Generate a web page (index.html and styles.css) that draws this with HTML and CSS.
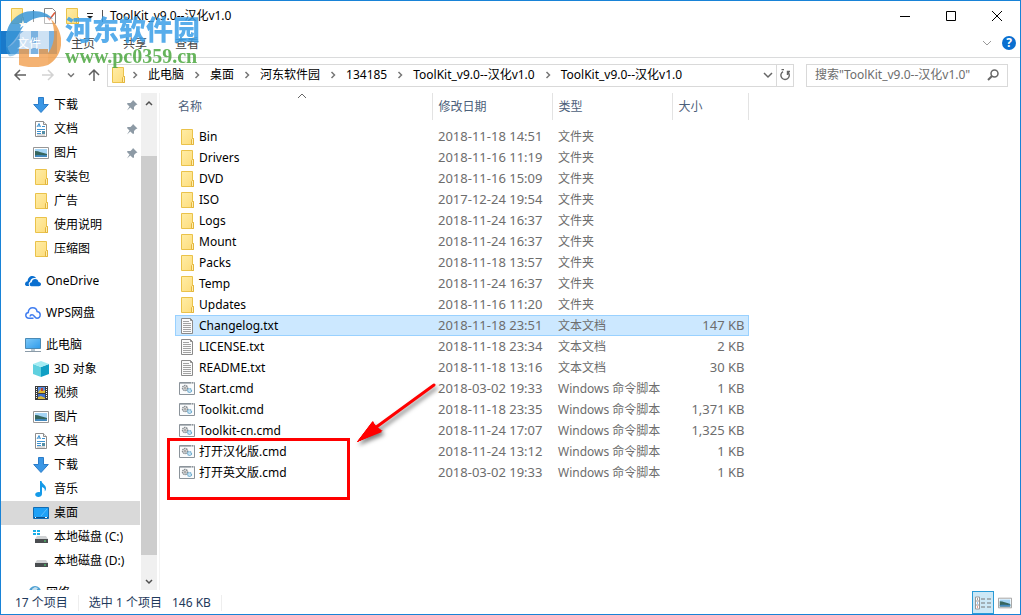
FILE: index.html
```
<!DOCTYPE html>
<html lang="zh-CN">
<head>
    <meta charset="UTF-8">
    <meta name="viewport" content="width=device-width, initial-scale=1.0">
    <title>ToolKit_v9.0--汉化v1.0</title>
    <link rel="stylesheet" href="styles.css">
</head>
<body>
    <svg class="sprite" aria-hidden="true">
        <defs>
            <linearGradient id="g-folder" x1="0" y1="0" x2="1" y2="1">
                <stop offset="0" stop-color="#ffeda6"/><stop offset="1" stop-color="#fddc7b"/>
            </linearGradient>
            <linearGradient id="g-screen" x1="0" y1="0" x2="1" y2="1">
                <stop offset="0" stop-color="#7cc8f8"/><stop offset="1" stop-color="#2f9bea"/>
            </linearGradient>
        </defs>
        <symbol id="folder" viewBox="0 0 16 16">
            <path d="M2.500.5h11v9h1v6h-12z" fill="url(#g-folder)" stroke="#eac24a"/>
            <path d="M12.500 15.500v-5l1-1h1v6z" fill="#fff0b0" stroke="#e3b53d"/>
        </symbol>
        <symbol id="txt" viewBox="0 0 16 16">
            <path d="M2.500.5h9l2 2v13h-11z" fill="#fbfbfb" stroke="#8a8a8a"/>
            <path d="M11.500.5v2h2" fill="none" stroke="#8a8a8a"/>
            <path d="M4 3.500h6M4 5.500h8M4 7.500h8M4 9.500h8M4 11.500h8M4 13.500h8" stroke="#a2a2a2"/>
        </symbol>
        <symbol id="cmd" viewBox="0 0 16 16">
            <path d="M.5 1.500h15v12H.5z" fill="#fafbfc" stroke="#8b939a"/>
            <path d="M1 2.500h14" stroke="#b4babf"/>
            <path d="M12 2h1M14 2h1" stroke="#fff"/>
            <circle cx="6" cy="7" r="2.500" fill="#e8e8e8" stroke="#878d92" stroke-width="1.500" stroke-dasharray="1.500 .6"/>
            <circle cx="6" cy="7" r="1" fill="#999"/>
            <circle cx="10.500" cy="9.500" r="2" fill="#c4e2f2" stroke="#6eaacd" stroke-width="1.200" stroke-dasharray="1.300 .5"/>
        </symbol>
        <symbol id="down" viewBox="0 0 16 16">
            <path d="M5.500.5h5v7h4.800L8 15.500.7 7.500h4.800z" fill="#3b97e5" stroke="#2b7cc9"/>
        </symbol>
        <symbol id="doc" viewBox="0 0 16 16">
            <path d="M2.500.5h8l3 3v12h-11z" fill="#fff" stroke="#8d8d8d"/>
            <path d="M10.500.5v3h3" fill="#eee" stroke="#8d8d8d"/>
            <path d="M4 6l2-3.500L7.500 6M5 5h2M9 5.500h3M4 8.500h8M4 10.500h4M4 12.500h4" fill="none" stroke="#3c91cf"/>
            <path d="M9 10h3v3H9z" fill="#548fa8"/>
            <path d="M4 14h8" stroke="#b4b4b4"/>
        </symbol>
        <symbol id="pic" viewBox="0 0 16 16">
            <path d="M.5 2.500h15v11H.5z" fill="#fff" stroke="#979797"/>
            <path d="M2 4h12v8H2z" fill="#a5d5f5"/>
            <path d="M2 6c4 0 7 2 12 3v3H2z" fill="#36665e"/>
            <path d="M2 10.500c4-1 8 0 12-.5v2H2z" fill="#4389be"/>
        </symbol>
        <symbol id="cloud" viewBox="0 0 16 16">
            <path d="M0 11.200c0-2 1.400-3 2.700-3C2.600 5 5 3 7.400 3c2 0 3.200 1 3.800 2.300C7.800 4.300 5.600 6 5.200 8.500 3.700 9 3.200 11 4.200 13H2.500C1 13 0 12.300 0 11.200z" fill="#0a6fd0"/>
            <path d="M4.700 11.500c0-1.400 1-2.300 2-2.300C7 6.800 8.600 6 10 6c2 0 3.200 1.300 3.500 3 1.500.1 2.500 1 2.500 2.200 0 1.200-1 2-2.200 2H6.500c-1.100 0-1.800-.7-1.800-1.700z" fill="#0a6fd0"/>
        </symbol>
        <symbol id="wps" viewBox="0 0 16 16">
            <path d="M8.500 13.200H4C2 13.200.8 12 .8 10.300c0-1.500 1-2.600 2.500-2.800C3.300 4.600 5.200 2.800 7.700 2.800c2.300 0 4 1.500 4.400 3.700 1.900.2 3.100 1.600 3.100 3.300 0 1.900-1.400 3.400-3.300 3.400-2.300 0-2.500-3.400-4.900-3.400-1.200 0-1.800.8-1.800 1.700" fill="none" stroke="#3f7df0" stroke-width="1.500"/>
        </symbol>
        <symbol id="pc" viewBox="0 0 16 16">
            <path d="M.5 1.500h15v10H.5z" fill="url(#g-screen)" stroke="#4b8ab5"/>
            <path d="M6 12h4v2H6z" fill="#b8c7d1"/>
            <path d="M0 14.500h16" stroke="#8b9ba8"/>
        </symbol>
        <symbol id="cube" viewBox="0 0 16 16">
            <path d="M0 3l8 3v10l-8-3z" fill="#5fd0df"/>
            <path d="M16 3L8 6v10l8-3z" fill="#109fc4"/>
            <path d="M0 3l8-3 8 3-8 3z" fill="#a4ecf3"/>
        </symbol>
        <symbol id="film" viewBox="0 0 16 16">
            <path d="M2 1h13v14H2z" fill="#3c3c3c"/>
            <path d="M5 2h7v6H5z" fill="#5b8ede"/><path d="M5 9h7v5H5z" fill="#3c6fd0"/>
            <path d="M6 6l2-2 2 2 2-1v3H5z" fill="#e1b82f"/><path d="M8 3h2v3H8z" fill="#c43f2e"/>
            <path d="M5 12l3-1 4 2v1H5z" fill="#d9b93e"/>
            <path d="M3.500 2v12M13.500 2v12" stroke="#fff" stroke-dasharray="1 1"/>
        </symbol>
        <symbol id="note" viewBox="0 0 16 16">
            <path d="M7 0h1.500c.3 3 5 4 4.500 8-.2 1-.8 2-1.300 2.300.6-2-.7-3.700-2.700-4.300v7c0 2-1.700 3-3.700 3C3.500 16 2.200 15 2.200 13.500S4 10.800 7 11.200z" fill="#159ae8"/>
        </symbol>
        <symbol id="desk" viewBox="0 0 16 16">
            <path d="M.5 2.500h15v11H.5z" fill="#1ea1f7" stroke="#126bb2"/>
            <path d="M1 12.500h14" stroke="#0d4f8a"/>
            <path d="M2 12.500h1M12 12.500h2" stroke="#fff"/>
            <path d="M8 11l6-7" stroke="#5cbdfb"/>
        </symbol>
        <symbol id="disk" viewBox="0 0 16 16">
            <path d="M4 7h9l2 3H2z" fill="#d0d2d4"/>
            <path d="M2 10h13v4H2z" fill="#4a4d50"/>
            <path d="M11 12h2" stroke="#4ee070"/>
        </symbol>
        <symbol id="diskc" viewBox="0 0 16 16">
            <path d="M0 1h3v2H0zM4 1h3v2H4zM0 4h3v2H0zM4 4h3v2H4z" fill="#19aee8"/>
            <use href="#disk"/>
        </symbol>
        <symbol id="net" viewBox="0 0 16 16">
            <circle cx="10" cy="7" r="6" fill="#4c9fd2"/>
            <path d="M7 4l3-2 3 1-2 3-3 1zM12 8l3-1-1 4z" fill="#c6e0ee"/>
        </symbol>
        <symbol id="pin" viewBox="0 0 16 16">
            <path d="M9 3l4.500 4.500-1.500.5-2 2 0 2.500-1 .5L6.300 10.500 3 13.500l2.500-4L3 7l.5-1L6.500 6l2-2z" fill="#8d9aa5"/>
        </symbol>
        <symbol id="next" viewBox="0 0 8 8">
            <path d="M2.500 1l3 3-3 3" fill="none" stroke="#777" stroke-width="1.500"/>
        </symbol>
        <symbol id="check" viewBox="0 0 16 16">
            <path d="M2.500.5h8l3 3v12h-11z" fill="#fff" stroke="#858585"/>
            <path d="M4.500 8l3 3.500 5.500-7" fill="none" stroke="#dc5a3c" stroke-width="1.500"/>
        </symbol>
    </svg>

    <div class="window">
        <header class="titlebar">
            <div class="quick">
                <svg class="icon"><use href="#folder"/></svg>
                <span class="bar"></span>
                <svg class="icon"><use href="#check"/></svg>
                <svg class="icon"><use href="#folder"/></svg>
                <svg class="more" viewBox="0 0 8 8"><path d="M1 1.500h6" stroke="#222"/><path d="M1 4h6L4 7z" fill="#222"/></svg>
                <span class="bar"></span>
            </div>
            <h1>ToolKit_v9.0--汉化v1.0</h1>
            <div class="controls">
                <button type="button" aria-label="最小化"><svg viewBox="0 0 12 12"><path d="M1 6.500h10" stroke="#000"/></svg></button>
                <button type="button" aria-label="最大化"><svg viewBox="0 0 12 12"><path d="M1.500 1.500h9v9h-9z" fill="none" stroke="#000"/></svg></button>
                <button type="button" aria-label="关闭"><svg viewBox="0 0 12 12"><path d="M1 1l10 10M11 1L1 11" stroke="#000"/></svg></button>
            </div>
        </header>

        <nav class="tabs">
            <button type="button" class="file">文件</button>
            <button type="button">主页</button>
            <button type="button">共享</button>
            <button type="button">查看</button>
            <span class="help">
                <svg viewBox="0 0 10 10"><path d="M1 3l4 4 4-4" fill="none" stroke="#999"/></svg>
                <button type="button" class="ask" aria-label="帮助">?</button>
            </span>
        </nav>

        <div class="address">
            <div class="arrows">
                <button type="button" aria-label="后退"><svg viewBox="0 0 14 14"><path d="M13 7H2M7 2L2 7l5 5" fill="none" stroke="#606060" stroke-width="1.500"/></svg></button>
                <button type="button" aria-label="前进"><svg viewBox="0 0 14 14"><path d="M1 7h11M7 2l5 5-5 5" fill="none" stroke="#d2d2d2" stroke-width="1.500"/></svg></button>
                <button type="button" class="small" aria-label="最近"><svg viewBox="0 0 8 8"><path d="M1 2.500l3 3 3-3" fill="none" stroke="#777" stroke-width="1.500"/></svg></button>
                <button type="button" aria-label="上移"><svg viewBox="0 0 14 14"><path d="M7 13V2M2 7l5-5 5 5" fill="none" stroke="#606060" stroke-width="1.500"/></svg></button>
            </div>
            <div class="path">
                <svg class="icon"><use href="#folder"/></svg>
                <svg class="sep"><use href="#next"/></svg><a href="#">此电脑</a>
                <svg class="sep"><use href="#next"/></svg><a href="#">桌面</a>
                <svg class="sep"><use href="#next"/></svg><a href="#">河东软件园</a>
                <svg class="sep"><use href="#next"/></svg><a href="#">134185</a>
                <svg class="sep"><use href="#next"/></svg><a href="#">ToolKit_v9.0--汉化v1.0</a>
                <svg class="sep"><use href="#next"/></svg><a href="#">ToolKit_v9.0--汉化v1.0</a>
                <button type="button" class="drop" aria-label="展开"><svg viewBox="0 0 10 10"><path d="M1 3l4 4 4-4" fill="none" stroke="#666" stroke-width="1.500"/></svg></button>
                <button type="button" class="refresh" aria-label="刷新"><svg viewBox="0 0 12 12"><path d="M8.500 2.800A4.200 4.200 0 1 1 4 2.600M5 .5H2.500M8.500 6V2.500H11" fill="none" stroke="#666" stroke-width="1.400"/></svg></button>
            </div>
            <div class="search">
                <input type="text" aria-label="搜索" placeholder="搜索&quot;ToolKit_v9.0--汉化v1.0&quot;">
                <svg viewBox="0 0 12 12"><circle cx="7.500" cy="4.500" r="3.500" fill="none" stroke="#666" stroke-width="1.500"/><path d="M5 7L1 11" stroke="#666" stroke-width="2"/></svg>
            </div>
        </div>

        <div class="content">
            <aside class="tree">
                <ul>
                    <li><svg class="icon"><use href="#down"/></svg>下载<svg class="pin"><use href="#pin"/></svg></li>
                    <li><svg class="icon"><use href="#doc"/></svg>文档<svg class="pin"><use href="#pin"/></svg></li>
                    <li><svg class="icon"><use href="#pic"/></svg>图片<svg class="pin"><use href="#pin"/></svg></li>
                    <li><svg class="icon"><use href="#folder"/></svg>安装包</li>
                    <li><svg class="icon"><use href="#folder"/></svg>广告</li>
                    <li><svg class="icon"><use href="#folder"/></svg>使用说明</li>
                    <li><svg class="icon"><use href="#folder"/></svg>压缩图</li>
                    <li class="root"><svg class="icon"><use href="#cloud"/></svg>OneDrive</li>
                    <li class="root"><svg class="icon"><use href="#wps"/></svg>WPS网盘</li>
                    <li class="root"><svg class="icon"><use href="#pc"/></svg>此电脑</li>
                    <li><svg class="icon"><use href="#cube"/></svg>3D 对象</li>
                    <li><svg class="icon"><use href="#film"/></svg>视频</li>
                    <li><svg class="icon"><use href="#pic"/></svg>图片</li>
                    <li><svg class="icon"><use href="#doc"/></svg>文档</li>
                    <li><svg class="icon"><use href="#down"/></svg>下载</li>
                    <li><svg class="icon"><use href="#note"/></svg>音乐</li>
                    <li class="current"><svg class="icon"><use href="#desk"/></svg>桌面</li>
                    <li><svg class="icon"><use href="#diskc"/></svg>本地磁盘 (C:)</li>
                    <li><svg class="icon"><use href="#disk"/></svg>本地磁盘 (D:)</li>
                    <li class="root"><svg class="icon"><use href="#net"/></svg>网络</li>
                </ul>
                <div class="scroll">
                    <svg viewBox="0 0 8 8"><path d="M1 6l3-3 3 3" fill="none" stroke="#505050" stroke-width="1.500"/></svg>
                    <div class="thumb"></div>
                    <svg viewBox="0 0 8 8"><path d="M1 2l3 3 3-3" fill="none" stroke="#505050" stroke-width="1.500"/></svg>
                </div>
            </aside>

            <main class="files">
                <table>
                    <thead>
                        <tr>
                            <th class="c-name">名称<svg class="sort" viewBox="0 0 8 6"><path d="M0 5l4-4 4 4" fill="none" stroke="#666"/></svg></th>
                            <th class="c-date">修改日期</th>
                            <th class="c-type">类型</th>
                            <th class="c-size">大小</th>
                        </tr>
                    </thead>
                    <tbody>
                        <tr><td class="name"><svg class="icon"><use href="#folder"/></svg>Bin</td><td class="date">2018-11-18 14:51</td><td>文件夹</td><td></td></tr>
                        <tr><td class="name"><svg class="icon"><use href="#folder"/></svg>Drivers</td><td class="date">2018-11-16 11:19</td><td>文件夹</td><td></td></tr>
                        <tr><td class="name"><svg class="icon"><use href="#folder"/></svg>DVD</td><td class="date">2018-11-16 15:09</td><td>文件夹</td><td></td></tr>
                        <tr><td class="name"><svg class="icon"><use href="#folder"/></svg>ISO</td><td class="date">2017-12-24 19:54</td><td>文件夹</td><td></td></tr>
                        <tr><td class="name"><svg class="icon"><use href="#folder"/></svg>Logs</td><td class="date">2018-11-24 16:37</td><td>文件夹</td><td></td></tr>
                        <tr><td class="name"><svg class="icon"><use href="#folder"/></svg>Mount</td><td class="date">2018-11-24 16:37</td><td>文件夹</td><td></td></tr>
                        <tr><td class="name"><svg class="icon"><use href="#folder"/></svg>Packs</td><td class="date">2018-11-18 13:57</td><td>文件夹</td><td></td></tr>
                        <tr><td class="name"><svg class="icon"><use href="#folder"/></svg>Temp</td><td class="date">2018-11-24 16:37</td><td>文件夹</td><td></td></tr>
                        <tr><td class="name"><svg class="icon"><use href="#folder"/></svg>Updates</td><td class="date">2018-11-16 11:20</td><td>文件夹</td><td></td></tr>
                        <tr class="selected"><td class="name"><svg class="icon"><use href="#txt"/></svg>Changelog.txt</td><td class="date">2018-11-18 23:51</td><td>文本文档</td><td class="size">147 KB</td></tr>
                        <tr><td class="name"><svg class="icon"><use href="#txt"/></svg>LICENSE.txt</td><td class="date">2018-11-18 23:34</td><td>文本文档</td><td class="size">2 KB</td></tr>
                        <tr><td class="name"><svg class="icon"><use href="#txt"/></svg>README.txt</td><td class="date">2018-11-18 13:16</td><td>文本文档</td><td class="size">30 KB</td></tr>
                        <tr><td class="name"><svg class="icon"><use href="#cmd"/></svg>Start.cmd</td><td class="date">2018-03-02 19:33</td><td>Windows 命令脚本</td><td class="size">1 KB</td></tr>
                        <tr><td class="name"><svg class="icon"><use href="#cmd"/></svg>Toolkit.cmd</td><td class="date">2018-11-18 23:35</td><td>Windows 命令脚本</td><td class="size">1,371 KB</td></tr>
                        <tr><td class="name"><svg class="icon"><use href="#cmd"/></svg>Toolkit-cn.cmd</td><td class="date">2018-11-24 17:07</td><td>Windows 命令脚本</td><td class="size">1,325 KB</td></tr>
                        <tr><td class="name"><svg class="icon"><use href="#cmd"/></svg>打开汉化版.cmd</td><td class="date">2018-11-24 13:12</td><td>Windows 命令脚本</td><td class="size">1 KB</td></tr>
                        <tr><td class="name"><svg class="icon"><use href="#cmd"/></svg>打开英文版.cmd</td><td class="date">2018-03-02 19:33</td><td>Windows 命令脚本</td><td class="size">1 KB</td></tr>
                    </tbody>
                </table>
                <div class="mark"></div>
                <svg class="pointer" viewBox="0 0 90 70">
                    <path d="M79 6L20 49" stroke="#f00" stroke-width="3" stroke-linecap="round"/>
                    <path d="M2 63L18 43l3 5 6 5z" fill="#f00"/>
                    <path d="M2 63L18 43l4 5 5 4 z M2 63l16-20 3 4 5 4 2 1-1 0z" fill="#f00"/>
                    <path d="M2 63L17 43l5 5 4 3v0l0 0z" fill="#f00"/>
                    <path d="M2 63L18 42l1 7 5 2 2 1z" fill="#f00"/>
                    <path d="M2 63l24-11-6-4-2-6z" fill="#f00"/>
                </svg>
            </main>
        </div>

        <footer class="status">
            <span class="count">17 个项目</span>
            <span class="picked">选中 1 个项目</span>
            <span class="total">146 KB</span>
            <div class="views">
                <button type="button" class="on" aria-label="详细信息"><svg viewBox="0 0 16 13"><path d="M.5.5h4v12h-4zM.5 4.500h4M.5 8.500h4" fill="#fff" stroke="#999"/><path d="M6 2.500h4M12 2.500h4M6 6.500h4M12 6.500h4M6 10.500h4M12 10.500h4" stroke="#777"/><path d="M2 2h1v1H2z" fill="#444"/><path d="M2 6h1v1H2z" fill="#2b8be0"/><path d="M2 10h1v1H2z" fill="#d33a20"/></svg></button>
                <button type="button" aria-label="大图标"><svg viewBox="0 0 16 16"><use href="#pic"/></svg></button>
            </div>
        </footer>
    </div>

    <div class="watermark">
        <svg class="logo" viewBox="0 0 56 56">
            <circle cx="28" cy="28" r="27" fill="#fff" opacity=".5"/>
            <path d="M1 30C0 13 12 0 28 0c9 0 16 3 20 8C36 3 22 8 16 19 11 28 6 34 1 37z" fill="#3b97d7"/>
            <path d="M1 37c6-2 10-7 13-12v14c-2 4-6 7-10 6-2-3-3-5-3-8z" fill="#3b97d7" opacity=".6"/>
            <path d="M15 23l11-9v18h7V10l11 9v24H33V37h-7v8H15z" fill="#fff" opacity=".85"/>
            <path d="M46 8c15 14 13 37-3 46V42c7-9 8-22 3-34z" fill="#f0a050"/>
            <path d="M14 38h10v8h10v-8h9v16c-9 3-20 3-29 0z" fill="#f3a55a"/>
            <path d="M18 9l1 3h3l-2 2 1 3-3-2-3 2 1-3-2-2h3z" fill="#fff"/>
        </svg>
        <div class="brand">
            <strong>河东软件园</strong>
            <span>www.pc0359.cn</span>
        </div>
    </div>
</body>
</html>
```
FILE: styles.css
```
*{
    margin: 0;
    padding: 0;
    box-sizing: border-box;
}
body {
    height: 100vh;
    background: #fff;
    color: #000;
    font-family: "Noto Sans", "Noto Sans CJK SC", sans-serif;
    font-size: 12px;
    line-height: 16px;
}
button {
    border: none;
    background: none;
    font: inherit;
    display: flex;
    align-items: center;
    justify-content: center;
}
a {
    color: inherit;
    text-decoration: none;
}
svg {
    display: block;
    flex: none;
}
.sprite {
    position: absolute;
    width: 0;
    height: 0;
}
.icon {
    width: 16px;
    height: 16px;
}
.window {
    height: 100%;
    display: flex;
    flex-direction: column;
    border: 1px solid #1883d7;
}

/* title bar */
.titlebar {
    display: flex;
    align-items: center;
    height: 30px;
    flex: none;
}
.quick {
    display: flex;
    align-items: center;
    gap: 6px;
    padding-left: 8px;
}
.quick .bar {
    width: 1px;
    height: 12px;
    background: #555;
    margin: 0 2px;
}
.quick .more {
    width: 8px;
    height: 8px;
}
h1 {
    font-size: 12px;
    font-weight: normal;
    flex: 1;
    padding-left: 5px;
}
.controls {
    display: flex;
}
.controls button {
    width: 46px;
    height: 28px;
}
.controls svg {
    width: 12px;
    height: 12px;
}

/* ribbon tabs */
.tabs {
    display: flex;
    height: 27px;
    flex: none;
    padding-bottom: 3px;
    border-bottom: 1px solid #dadbdc;
}
.tabs button {
    padding: 2px 14px 0;
    color: #444;
}
.tabs .file {
    padding: 2px 16px 0;
    background: #1979ca;
    color: #fff;
}
.help {
    display: flex;
    align-items: center;
    gap: 10px;
    margin-left: auto;
    padding-right: 4px;
}
.help svg {
    width: 10px;
    height: 10px;
}
.help .ask {
    width: 14px;
    height: 14px;
    padding: 0;
    border-radius: 50%;
    background: #0a6fd0;
    color: #fff;
    font-weight: bold;
}

/* address row */
.address {
    display: flex;
    align-items: center;
    height: 34px;
    flex: none;
    padding-right: 12px;
}
.arrows {
    display: flex;
    align-items: center;
    gap: 14px;
    width: 106px;
    padding-left: 12px;
}
.arrows svg {
    width: 14px;
    height: 14px;
}
.arrows .small {
    width: 8px;
    margin: 0 -2px;
}
.arrows .small svg {
    width: 8px;
    height: 8px;
}
.path {
    flex: 1;
    display: flex;
    align-items: center;
    height: 23px;
    padding-left: 2px;
    border: 1px solid #d9d9d9;
}
.sep {
    width: 8px;
    height: 8px;
    margin: 0 9px;
}
.path .icon + .sep {
    margin-left: 5px;
}
.path button {
    width: 17px;
    height: 21px;
}
.path .drop {
    margin-left: auto;
}
.path .refresh {
    border-left: 1px solid #d9d9d9;
}
.path .drop svg {
    width: 10px;
    height: 10px;
}
.path .refresh svg {
    width: 12px;
    height: 12px;
}
.search {
    display: flex;
    align-items: center;
    width: 202px;
    height: 23px;
    margin-left: 12px;
    padding: 0 8px;
    border: 1px solid #d9d9d9;
}
.search input {
    flex: 1;
    min-width: 0;
    border: none;
    outline: none;
    font: inherit;
}
.search input::placeholder {
    color: #6d6d6d;
}
.search svg {
    width: 12px;
    height: 12px;
}

/* navigation tree */
.content {
    flex: 1;
    display: flex;
    min-height: 0;
    padding-top: 1px;
}
.tree {
    display: flex;
    width: 159px;
    flex: none;
    border-right: 1px solid #f3f3f3;
    overflow: hidden;
}
.tree ul {
    flex: 1;
    list-style: none;
}
.tree li {
    display: flex;
    align-items: center;
    gap: 5px;
    height: 24px;
    padding-left: 32px;
    white-space: nowrap;
}
.tree .root {
    margin-top: 8px;
    padding-left: 24px;
}
.tree .current {
    background: #d9d9d9;
}
.pin {
    width: 16px;
    height: 16px;
    margin-left: auto;
}
.scroll {
    display: flex;
    flex-direction: column;
    align-items: center;
    width: 16px;
    margin-right: 2px;
    margin-left: 1px;
    padding: 6px 0 4px;
    background: #f0f0f0;
}
.scroll svg {
    width: 8px;
    height: 8px;
}
.thumb {
    width: 100%;
    flex: 1;
    margin: 49px 0 23px;
    background: #cdcdcd;
}

/* file list */
.files {
    position: relative;
    flex: 1;
    padding-left: 15px;
}
table {
    width: 574px;
    table-layout: fixed;
    border-collapse: collapse;
}
.c-name { width: 257px; }
.c-date, .c-type { width: 120px; }
th {
    position: relative;
    height: 27px;
    padding-left: 6px;
    border-right: 1px solid #e3e3e3;
    color: #4c607a;
    font-weight: normal;
    text-align: left;
}
.c-name {
    padding-left: 3px;
}
.sort {
    position: absolute;
    top: 0;
    left: 48%;
    width: 8px;
    height: 6px;
}
tbody::before {
    content: "";
    display: block;
    height: 6px;
}
td {
    height: 21px;
    padding-left: 6px;
    color: #6d6d6d;
    white-space: nowrap;
}
.name {
    display: flex;
    align-items: center;
    gap: 4px;
    padding-left: 4px;
    color: #000;
}
.date,
.size {
    padding-bottom: 2px;
    font-size: 13px;
}
.size {
    padding-right: 4px;
    text-align: right;
}
.selected {
    background: #cce8ff;
    outline: 1px solid #99d1ff;
    outline-offset: -1px;
}
.mark {
    position: absolute;
    left: 7px;
    top: 345px;
    width: 183px;
    height: 62px;
    border: 3px solid #f00;
}
.pointer {
    position: absolute;
    left: 195px;
    top: 286px;
    width: 90px;
    height: 70px;
    filter: drop-shadow(2px 3px 2px rgba(0, 0, 0, 0.5));
}

/* status bar */
.status {
    display: flex;
    align-items: center;
    height: 24px;
    flex: none;
    padding-top: 1px;
    padding-left: 14px;
    color: #1e395b;
}
.status .count {
    padding-right: 10px;
    border-right: 1px solid #eee;
}
.status .picked {
    padding: 0 10px;
}
.status .total {
    padding-right: 10px;
    border-right: 1px solid #eee;
}
.views {
    display: flex;
    margin-left: auto;
    padding-right: 4px;
}
.views button {
    width: 22px;
    height: 23px;
}
.views .on {
    border: 1px solid #2a9bd6;
    background: #cce8f6;
}
.views svg {
    width: 16px;
    height: 14px;
}

/* site watermark over the window */
.watermark {
    position: absolute;
    left: 5px;
    top: 11px;
    display: flex;
    gap: 4px;
    pointer-events: none;
    opacity: 0.85;
}
.logo {
    width: 56px;
    height: 56px;
}
.brand {
    display: flex;
    flex-direction: column;
    padding-top: 3px;
}
.brand strong {
    color: #3b9fe8;
    font-size: 27px;
    font-weight: 900;
    line-height: 32px;
}
.brand span {
    color: #4da840;
    font-family: "Liberation Serif", serif;
    font-size: 20px;
    font-weight: bold;
    line-height: 20px;
}
```
